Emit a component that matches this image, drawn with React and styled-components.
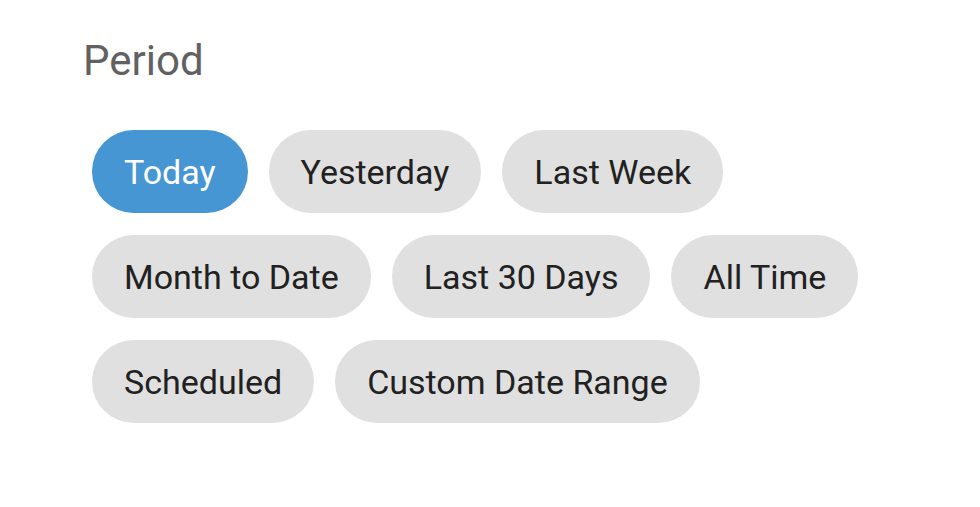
import React, {useState} from 'react';
import styled, {createGlobalStyle} from 'styled-components';

const GlobalStyle = createGlobalStyle`
    body {
        margin: 0;
        background: #ffffff;
        font-family: Roboto, "Liberation Sans", sans-serif;
    }
    `;

const Panel = styled.section`
    padding: 36px 0 0 83px;
    `;

const Title = styled.h2`
    margin: 0;
    font-size: 42px;
    font-weight: 400;
    line-height: 49px;
    color: #616161;
    `;

const ChipGroup = styled.div`
    display: flex;
    flex-wrap: wrap;
    gap: 22px 21px;
    width: 860px;
    margin: 45px 0 0 9px;
    `;

const Chip = styled.button`
    display: flex;
    align-items: center;
    height: 83px;
    padding: 0 32px;
    border: none;
    border-radius: 42px;
    font-family: inherit;
    font-size: 34px;
    font-weight: 400;
    color: ${({$active}) => ($active ? '#ffffff' : '#212121')};
    background-color: ${({$active}) => ($active ? '#4596d2' : '#e0e0e0')};
    cursor: pointer;
    `;

const periods = [
    'Today',
    'Yesterday',
    'Last Week',
    'Month to Date',
    'Last 30 Days',
    'All Time',
    'Scheduled',
    'Custom Date Range',
];

function App() {
    const [selected, setSelected] = useState('Today');

    return (<>
            <GlobalStyle />
            <Panel>
                <Title>Period</Title>
                <ChipGroup>
                    {periods.map((period) => (
                        <Chip
                            key={period}
                            $active={period === selected}
                            onClick={() => setSelected(period)}
                        >
                            {period}
                        </Chip>
                    ))}
                </ChipGroup>
            </Panel>
        </>
    )
}

export default App
